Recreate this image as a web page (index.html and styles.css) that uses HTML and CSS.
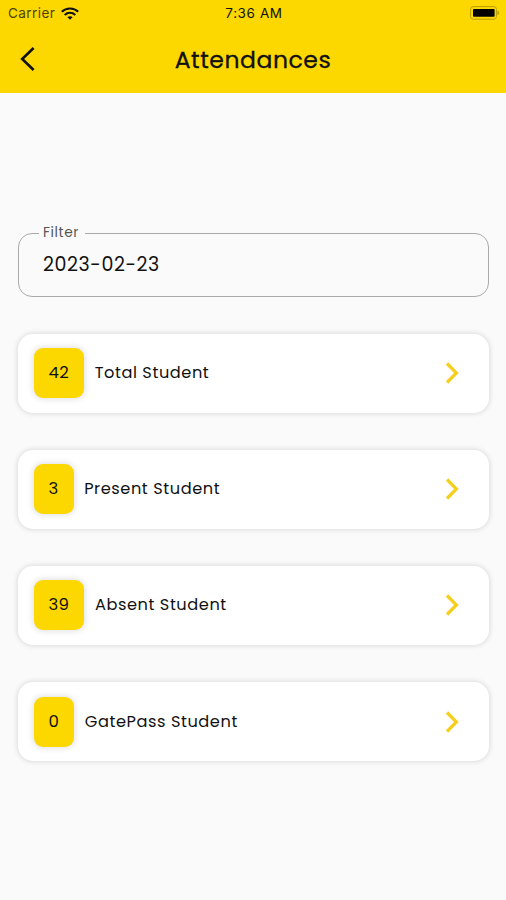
FILE: index.html
```html
<!DOCTYPE html>
<html lang="en">
<head>
    <meta charset="UTF-8">
    <meta name="viewport" content="width=device-width, initial-scale=1.0">
    <title>Attendances</title>
    <link rel="stylesheet" href="styles.css">
</head>
<body>
    <header class="header">
        <div class="status-bar">
            <div class="carrier">
                <span>Carrier</span>
                <svg class="wifi" width="18" height="13" viewBox="0 0 18 13" fill="none" stroke="#111" stroke-width="2.1">
                    <path d="M0.8 4.8C5.3 0.4 12.7 0.4 17.2 4.8"/>
                    <path d="M3.7 7.9C6.7 5 11.3 5 14.3 7.9"/>
                    <path d="M9 12.8L6.4 10.2C7.8 8.9 10.2 8.9 11.6 10.2Z" fill="#111" stroke="none"/>
                </svg>
            </div>
            <span class="time">7:36 AM</span>
            <svg class="battery" width="30" height="14" viewBox="0 0 30 14">
                <rect x="0.6" y="0.6" width="25.8" height="12.6" rx="2.6" fill="none" stroke="#b89d00" stroke-width="1"/>
                <rect x="3" y="3" width="21.6" height="7.8" rx="0.8" fill="#000"/>
                <path d="M27.4 4.6C29.8 5.4 29.8 8.4 27.4 9.2Z" fill="#b89d00"/>
            </svg>
        </div>
        <div class="title-bar">
            <svg class="back" width="16" height="26" viewBox="0 0 16 26" fill="none" stroke="#111" stroke-width="2.6">
                <path d="M13.6 2L2.2 13L13.6 24"/>
            </svg>
            <h1>Attendances</h1>
        </div>
    </header>

    <main>
        <fieldset class="filter">
            <legend>Filter</legend>
            <div class="date">2023-02-23</div>
        </fieldset>

        <div class="card-list">
            <div class="card">
                <span class="count">42</span>
                <span class="label">Total Student</span>
                <svg class="arrow" width="16" height="24" viewBox="0 0 16 24"><path d="M3 2.5L12.4 12L3 21.5"/></svg>
            </div>
            <div class="card">
                <span class="count">3</span>
                <span class="label">Present Student</span>
                <svg class="arrow" width="16" height="24" viewBox="0 0 16 24"><path d="M3 2.5L12.4 12L3 21.5"/></svg>
            </div>
            <div class="card">
                <span class="count">39</span>
                <span class="label">Absent Student</span>
                <svg class="arrow" width="16" height="24" viewBox="0 0 16 24"><path d="M3 2.5L12.4 12L3 21.5"/></svg>
            </div>
            <div class="card">
                <span class="count">0</span>
                <span class="label">GatePass Student</span>
                <svg class="arrow" width="16" height="24" viewBox="0 0 16 24"><path d="M3 2.5L12.4 12L3 21.5"/></svg>
            </div>
        </div>
    </main>
</body>
</html>
```

FILE: styles.css
```css
* {
    box-sizing: border-box;
}
body {
    margin: 0;
    min-height: 900px;
    background-color: #fafafa;
    color: #111;
    font-family: Poppins, Inter, sans-serif;
}
.header {
    height: 93px;
    background-color: #fcd800;
}
.status-bar {
    display: grid;
    grid-template-columns: 1fr auto 1fr;
    align-items: center;
    height: 26px;
    padding: 0 6px 0 8px;
    font-family: Inter, sans-serif;
    font-size: 13.5px;
}
.carrier {
    display: flex;
    align-items: center;
    gap: 6px;
    color: #4d4304;
    letter-spacing: 0.45px;
}
.time {
    letter-spacing: 0.6px;
}
.battery {
    justify-self: end;
}
.title-bar {
    display: grid;
    grid-template-columns: 40px 1fr 40px;
    align-items: center;
    height: 65px;
    padding: 0 20px;
}
h1 {
    margin: 0;
    padding-top: 2px;
    font-size: 23.5px;
    font-weight: 400;
    letter-spacing: 0.55px;
    text-align: center;
    -webkit-text-stroke: 0.3px #111;
}
main {
    padding: 131px 17px 0 18px;
}
.filter {
    height: 73px;
    margin: 0;
    padding: 11px 24px;
    border: 1px solid #aaa;
    border-radius: 14px;
}
.filter legend {
    height: 18px;
    margin-left: -4px;
    padding: 0 6px 0 4px;
    color: #555;
    font-size: 13.8px;
    line-height: 18px;
    letter-spacing: 0.6px;
}
.date {
    font-size: 19px;
    line-height: 24px;
    letter-spacing: 0.6px;
}
.card-list {
    display: flex;
    flex-direction: column;
    gap: 37.2px;
    margin-top: 36.6px;
}
.card {
    display: flex;
    align-items: center;
    height: 79px;
    padding: 0 29px 0 15.5px;
    border-radius: 15px;
    background-color: #fff;
    box-shadow: 0 0 5px 1px rgba(0, 0, 0, 0.12);
}
.count {
    height: 50px;
    padding: 0 15px;
    border-radius: 9px;
    background-color: #fcd800;
    box-shadow: 0 0 6px 1px rgba(0, 0, 0, 0.13);
    font-size: 16.5px;
    line-height: 50px;
    letter-spacing: 0.4px;
}
.label {
    margin-left: 10.5px;
    font-size: 16.2px;
    line-height: 24px;
    letter-spacing: 0.57px;
}
.arrow {
    margin-left: auto;
    fill: none;
    stroke: #f5cf1b;
    stroke-width: 3.2;
}
```
